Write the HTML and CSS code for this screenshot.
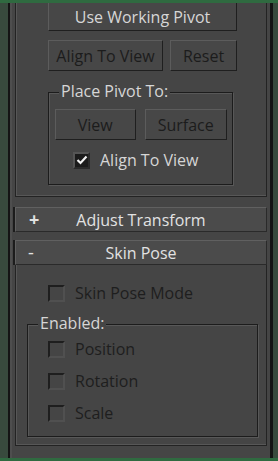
FILE: index.html
```html
<!DOCTYPE html>
<html lang="en">
<head>
  <meta charset="UTF-8">
  <title>Hierarchy Pivot</title>
  <link rel="stylesheet" href="styles.css">
</head>
<body>
<div class="frame">
  <!-- Adjust Pivot rollout (top cut off) -->
  <div class="rollout pivot">
    <div class="btn wide top">Use Working Pivot</div>
    <div class="btn-row">
      <div class="btn dim align">Align To View</div>
      <div class="btn dim reset">Reset</div>
    </div>
    <div class="group place">
      <div class="group-label">Place Pivot To:</div>
      <div class="btn-row inner">
        <div class="btn dim view">View</div>
        <div class="btn dim surface">Surface</div>
      </div>
      <label class="check on">
        <span class="box">
          <svg width="12" height="10" viewBox="0 0 12 10"><path d="M1.5 5 L4.5 8 L10.5 1.5" fill="none" stroke="#f2f2f2" stroke-width="2.2"/></svg>
        </span>
        Align To View
      </label>
    </div>
  </div>

  <div class="header"><span class="sign">+</span>Adjust Transform</div>
  <div class="header"><span class="sign minus">-</span>Skin Pose</div>

  <!-- Skin Pose rollout -->
  <div class="rollout skin">
    <label class="check off mode"><span class="box"></span>Skin Pose Mode</label>
    <div class="group enabled">
      <div class="group-label">Enabled:</div>
      <label class="check off"><span class="box"></span>Position</label>
      <label class="check off"><span class="box"></span>Rotation</label>
      <label class="check off"><span class="box"></span>Scale</label>
    </div>
  </div>
</div>
</body>
</html>
```

FILE: styles.css
```css
* { box-sizing: border-box; }
body {
  margin: 0;
  width: 278px;
  height: 461px;
  overflow: hidden;
  background-color: #384a3d;
  border-top: 3px solid #2f6a40;
  border-bottom: 3px solid #2f6a40;
  font-family: 'Open Sans', 'Noto Sans', sans-serif;
  font-size: 16px;
  color: #d6d6d6;
}
.frame {
  margin-left: 8px;
  width: 265px;
  height: 455px;
  background-color: #454545;
  border-left: 2px solid #141414;
  border-right: 3px solid #141414;
  padding: 0 3px 0 5px;
  box-shadow: inset 2px 0 0 #4e4e4e;
}
.rollout {
  border: 1px solid #232323;
  border-top: none;
  box-shadow: inset 1px -1px 0 #575757;
}
.pivot {
  height: 194px;
  padding: 0 29px 0 32px;
}
.btn {
  display: flex;
  align-items: center;
  justify-content: center;
  height: 31px;
  border: 1px solid #1f1f1f;
  border-top-color: #5c5c5c;
  border-left-color: #5c5c5c;
  background-color: #474747;
}
.btn.top {
  height: 28px;
  border-top: none;
  padding-top: 1px;
}
.btn.dim { color: #1c1c1c; }
.btn-row {
  display: flex;
  gap: 7px;
  margin-top: 9px;
}
.align { width: 115px; }
.reset { width: 67px; }
.group {
  position: relative;
  border: 1px solid #1c1c1c;
  box-shadow: 1px 1px 0 #585858, inset 1px 1px 0 #585858;
}
.group-label {
  position: absolute;
  top: -12px;
  left: 10px;
  padding: 0 2px;
  background-color: #454545;
  line-height: 20px;
  white-space: nowrap;
}
.place {
  margin-top: 21px;
  width: 185px;
  height: 93px;
  padding: 16px 5px 0 6px;
}
.place .inner {
  margin-top: 0;
  gap: 9px;
}
.view { width: 81px; }
.surface { width: 83px; }
.check {
  display: flex;
  align-items: center;
  gap: 10px;
  height: 20px;
}
.box {
  width: 17px;
  height: 17px;
  display: flex;
  align-items: center;
  justify-content: center;
}
.check.on {
  margin: 10px 0 0 18px;
}
.check.on .box {
  background-color: #1b1b1b;
  border: 2px solid #555;
  border-right-color: #2a2a2a;
  border-bottom-color: #2a2a2a;
}
.check.off {
  color: #1e1e1e;
}
.check.off .box {
  border: 2px solid #1e1e1e;
  border-right-color: #505050;
  border-bottom-color: #505050;
}
.header {
  position: relative;
  height: 25px;
  margin-top: 10px;
  display: flex;
  align-items: center;
  justify-content: center;
  background-color: #4b4b4b;
  border: 1px solid #606060;
  border-right-color: #2a2a2a;
  border-bottom-color: #2a2a2a;
  box-shadow: -2px 0 0 #1c1c1c;
  color: #e2e2e2;
}
.header + .header { margin-top: 8px; }
.sign {
  position: absolute;
  left: 13px;
  top: 1px;
  font-size: 18px;
  font-weight: bold;
  line-height: 20px;
}
.sign.minus { left: 12px; font-weight: normal; }
.skin {
  margin-top: 0;
  height: 181px;
  padding: 18px 10px 0 11px;
  border-top: none;
}
.check.mode { margin-left: 21px; }
.enabled {
  margin-top: 21px;
  width: 231px;
  height: 113px;
  padding: 14px 0 0 20px;
  display: flex;
  flex-direction: column;
  gap: 12px;
}
```
